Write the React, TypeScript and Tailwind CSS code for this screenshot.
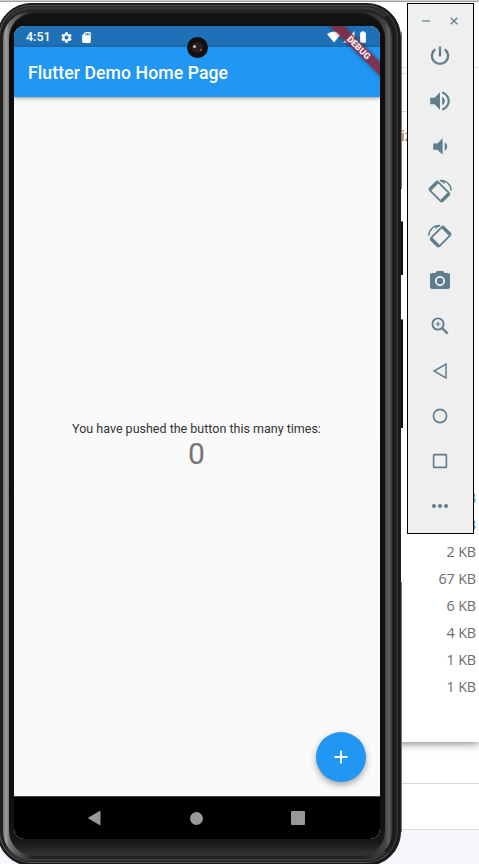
import type { ReactNode } from 'react';
import {
  MdVolumeUp,
  MdVolumeDown,
  MdPhotoCamera,
  MdMoreHoriz,
  MdSettings,
  MdSdCard,
  MdBatteryFull,
} from 'react-icons/md';

const sizes = ['3 KB', '1 KB', '2 KB', '67 KB', '6 KB', '4 KB', '1 KB', '1 KB'];

function Desktop() {
  return (
    <div className="flex h-full flex-col bg-white">
      <div className="relative z-10 flex h-[742px] shrink-0 flex-col bg-white shadow-[0_1px_9px_rgba(0,0,0,0.55)]">
        <div className="h-[2px] border-b border-[#a0a0a0] bg-[#d0d0d0]" />
        <div className="h-[66px] border-b border-[#dcdcdc]" />
        <div className="h-[6px] w-[407px] border-b border-[#dcdcdc]" />
        <div className="h-[38px] w-[407px] border-b border-[#dcdcdc]" />
        <div className="h-[48px] pl-[401px] pt-[11px] font-['Noto_Sans',sans-serif] text-[15px] leading-[24px] text-[#a5683f]">iz</div>
        <div className="mt-[324px] flex flex-col pr-[3px] text-right font-['Open_Sans','Noto_Sans',sans-serif] text-[14.4px] leading-[27px] tracking-[-0.15px] text-[#6d6d6d]">
          {sizes.map((size, i) => (
            <div key={i} className={i < 2 ? 'text-[#3f7fb5]' : ''}>{size}</div>
          ))}
        </div>
      </div>
      <div className="h-[42px] shrink-0 border-b border-[#d8d9db]" />
      <div className="h-[46px] shrink-0 border-b border-[#d8d9db]" />
      <div className="grow bg-[#f6f7fa]" />
    </div>
  );
}

function StatusBar() {
  return (
    <div className="flex h-[21px] items-center bg-[#1e71b6] pl-[12px] pr-[10px] pt-px text-white">
      <span className="w-[34px] text-[12.5px] font-medium leading-none">4:51</span>
      <MdSettings className="size-[13px]" />
      <MdSdCard className="ml-[7px] size-[13px]" />
      <svg className="ml-auto mr-[2px] h-[12px] w-[14px]" viewBox="0 0 14 12">
        <path d="M0 3Q7-2 14 3L7 11.5Z" fill="#fff" />
      </svg>
      <svg className="mr-px size-[12px]" viewBox="0 0 12 12">
        <path d="M11.5 0V11.5H0Z" fill="#fff" />
      </svg>
      <MdBatteryFull className="size-[14px]" />
    </div>
  );
}

function Screen() {
  return (
    <div className="relative flex h-full flex-col overflow-hidden rounded-[10px] bg-[#fafafa]">
      <StatusBar />
      <div className="z-10 flex h-[50px] shrink-0 items-center bg-[#2196f3] pl-[14px] pt-[2px] text-[17.6px] font-medium tracking-[0.1px] text-white shadow-[0_1px_4px_rgba(0,0,0,0.45)]">
        Flutter Demo Home Page
      </div>
      <div className="relative flex grow flex-col items-center justify-center pb-[2px] pr-px">
        <div className="text-[12.5px] leading-[15px] text-[#333]">You have pushed the button this many times:</div>
        <div className="text-[30px] leading-[35px] text-[#757575]">0</div>
        <button className="absolute bottom-[14px] right-[14.5px] flex size-[50px] items-center justify-center rounded-full bg-[#2196f3] shadow-[0_3px_6px_rgba(0,0,0,0.35)]">
          <svg className="size-[14px]" viewBox="0 0 14 14">
            <path d="M7 .5V13.5M.5 7H13.5" stroke="#fff" strokeWidth="1.8" />
          </svg>
        </button>
      </div>
      <div className="flex h-[43px] shrink-0 items-center justify-between border-t border-[#444] bg-black pl-[73px] pr-[75px]">
        <svg className="h-[16px] w-[14px]" viewBox="0 0 14 16">
          <path d="M13 1.2V14.8L1.5 8Z" fill="#999" stroke="#999" strokeLinejoin="round" />
        </svg>
        <div className="size-[13px] rounded-full bg-[#999]" />
        <div className="size-[14px] rounded-[1px] bg-[#999]" />
      </div>
      <div className="absolute -right-[44px] top-[15.5px] z-20 h-[10px] w-[132px] origin-center rotate-45 bg-[#8b2537]/85 pl-[2px] text-center text-[9px] font-black leading-[10px] text-white/90 shadow-[0_0_4px_rgba(0,0,0,0.45)]">
        DEBUG
      </div>
      <div className="absolute left-[173px] top-[11px] z-20 flex size-[21px] items-center justify-center rounded-full bg-[#111]">
        <div className="flex size-[11px] items-center justify-between rounded-full bg-[#2b211f] px-[1px]">
          <div className="mb-[3px] size-[3px] rounded-full bg-[#c5c0bd]" />
          <div className="mt-[4px] size-[2px] rounded-full bg-[#a4612e]" />
        </div>
      </div>
    </div>
  );
}

function Phone() {
  return (
    <>
      <div className="absolute left-[400px] top-[221px] h-[54px] w-[3px] border-t border-[#777] bg-[#111]" />
      <div className="absolute left-[400px] top-[319px] h-[109px] w-[3px] border-t border-[#777] bg-[#111]" />
      <div className="absolute left-[401px] top-[32px] h-[157px] w-px bg-[#777]" />
      <div className="absolute left-[401px] top-[582px] h-[250px] w-px bg-[#777]" />
      <div className="absolute -left-[3px] top-[3px] h-[863px] w-[404px] rounded-[34px] border border-[#202020] bg-[#191919] pl-px pr-[2px] pt-px pb-[2px]">
        <div className="h-full rounded-[32px] border border-[#555] border-r-[#3c3c3c] bg-[#222] pb-px pl-px pr-[2px] pt-px">
          <div className="h-full rounded-[30px] border-2 border-[#393939] border-l-[#1c1c1c] border-l-[1px] border-r-[#1b1b1b] bg-[#252525] pb-0 pl-px pr-px pt-[3px]">
            <div className="h-full rounded-[27px] bg-[linear-gradient(90deg,#707070_0,#a0a0a0_3px,#777_6px,#222_30px,#222_360px,#444_382px,#606060_386px,#373737_100%)] pb-[3px] pl-[6px] pr-[7px] pt-px">
              <div className="h-full rounded-[25px] bg-[linear-gradient(180deg,#151515_0,#0d0d0d_20px,#111_800px,#171717_828px,#353535_100%)] pl-[5px] pr-[5px] pt-[13px]">
                <div className="h-[813px]">
                  <Screen />
                </div>
              </div>
            </div>
          </div>
        </div>
      </div>
    </>
  );
}

function RotateIcon({ mirrored = false }: { mirrored?: boolean }) {
  return (
    <svg className={mirrored ? 'h-[26px] w-[26px] -scale-x-100' : 'h-[26px] w-[26px]'} viewBox="0 0 26 26" fill="none" stroke="currentColor">
      <g transform="translate(12.4 13.6) rotate(45)">
        <rect x="-9" y="-5.9" width="18" height="11.8" rx="1.4" strokeWidth="1.8" />
        <path d="M-8.1-5V5M8.1-5V5" strokeWidth="3.2" />
      </g>
      <path d="M13 2.7C19 2 23.7 6.1 24.2 12.6" strokeWidth="1.5" />
      <path d="M12.4 2.2L17 2.4L18 6.2Z" fill="currentColor" stroke="none" />
    </svg>
  );
}

const tools: ReactNode[] = [
  <svg className="size-[20px]" viewBox="0 0 20 20" fill="none" stroke="currentColor" strokeWidth="2.3">
    <path d="M10 .6V10.5M5.2 3.2A8.1 8.1 0 1 0 14.8 3.2" />
  </svg>,
  <MdVolumeUp className="mt-px size-[26px]" />,
  <MdVolumeDown className="mt-px size-[25px]" />,
  <RotateIcon />,
  <RotateIcon mirrored />,
  <MdPhotoCamera className="size-[24px]" />,
  <svg className="size-[18px]" viewBox="0 0 18 18" fill="none" stroke="currentColor">
    <circle cx="7" cy="7" r="5.6" strokeWidth="1.9" />
    <path d="M11 11L16.7 16.7" strokeWidth="2.4" />
    <path d="M7 4.4V9.6M4.4 7H9.6" strokeWidth="1.2" />
  </svg>,
  <svg className="size-[18px]" viewBox="0 0 18 18">
    <path d="M15 2V16L3 9Z" fill="none" stroke="currentColor" strokeWidth="1.5" />
  </svg>,
  <svg className="size-[16px]" viewBox="0 0 16 16">
    <circle cx="8" cy="8" r="6.6" fill="none" stroke="currentColor" strokeWidth="1.6" />
  </svg>,
  <svg className="mt-px size-[16px]" viewBox="0 0 16 16">
    <rect x="1.6" y="1.6" width="12.8" height="12.8" rx="0.6" fill="none" stroke="currentColor" strokeWidth="1.6" />
  </svg>,
  <MdMoreHoriz className="size-[24px]" />,
];

function Toolbar() {
  return (
    <div className="absolute left-[407px] top-[3px] h-[531px] w-[67px] border border-black bg-[#efefef] text-[#607d8b]">
      <div className="flex h-[29px] items-center justify-between pl-[14px] pr-[15px] pt-[5px]">
        <div className="h-[1.5px] w-[8px] bg-[#9bafb7]" />
        <svg className="size-[8px]" viewBox="0 0 8 8">
          <path d="M.7.7L7.3 7.3M7.3.7L.7 7.3" stroke="currentColor" strokeWidth="1.3" />
        </svg>
      </div>
      <div className="flex flex-col items-center pr-px">
        {tools.map((tool, i) => (
          <div key={i} className="flex h-[45px] items-center justify-center">{tool}</div>
        ))}
      </div>
    </div>
  );
}

export default function App() {
  return (
    <div className="relative h-[864px] w-[479px] overflow-hidden bg-white font-[Roboto,sans-serif]">
      <Desktop />
      <div className="absolute inset-0 z-20">
        <Phone />
        <Toolbar />
      </div>
    </div>
  );
}
